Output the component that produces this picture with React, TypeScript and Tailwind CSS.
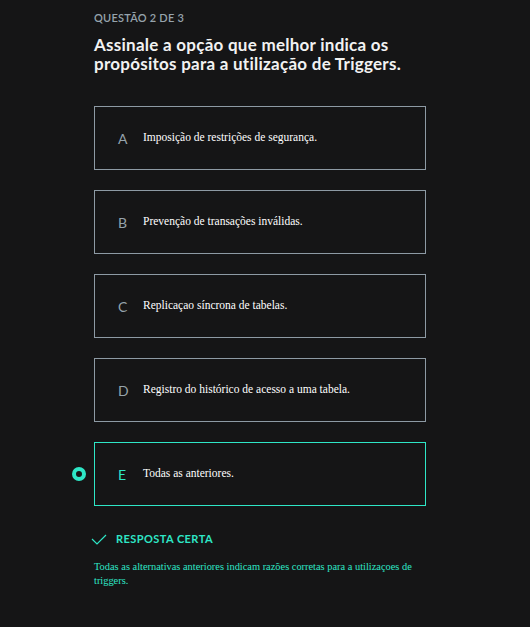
import React from 'react'

const options = [
  { id: 'A', text: 'Imposição de restrições de segurança.' },
  { id: 'B', text: 'Prevenção de transações inválidas.' },
  { id: 'C', text: 'Replicaçao síncrona de tabelas.' },
  { id: 'D', text: 'Registro do histórico de acesso a uma tabela.' },
  { id: 'E', text: 'Todas as anteriores.' },
]

const selected = 'E'

export default function App() {
  return (
    <div className="min-h-[627px] w-full bg-[#151516] font-['Lato','Liberation_Sans',sans-serif]">
      <div className="w-[332px] ml-[94px] pt-[11px] pb-8">
        {/* Header */}
        <p className="text-[11px] font-semibold tracking-[0.02em] text-[#96a3ac] leading-[14px]">QUESTÃO 2 DE 3</p>
        <h1 className="mt-[10px] text-[17px] font-bold leading-[19px] tracking-[0.015em] text-[#f2f2f2]">
          Assinale a opção que melhor indica os propósitos para a utilização de Triggers.
        </h1>

        {/* Options */}
        <div className="mt-[33px] flex flex-col gap-[20px]">
          {options.map((opt) => {
            const active = opt.id === selected
            return (
              <div key={opt.id} className="relative">
                {active && (
                  <span className="absolute left-[-22px] top-1/2 -translate-y-1/2 h-[14px] w-[14px] rounded-full border-[4px] border-[#2ee6c6] bg-[#151516]" />
                )}
                <div
                  className={`flex h-[64px] items-center border pl-[23px] ${
                    active ? 'border-[#2ee6c6]' : 'border-[#8d9aa4]'
                  }`}
                >
                  <span
                    className={`w-[25px] text-[14px] ${active ? 'text-[#2ee6c6]' : 'text-[#96a3ac]'}`}
                  >
                    {opt.id}
                  </span>
                  <span className="font-['Liberation_Serif',serif] text-[11.5px] text-white">{opt.text}</span>
                </div>
              </div>
            )
          })}
        </div>

        {/* Feedback */}
        <div className="mt-[25px] flex items-center">
          <svg width="16" height="11" viewBox="0 0 16 11" className="ml-[-3px]" fill="none">
            <path d="M1 5 L6 10 L15 1" stroke="#2ee6c6" strokeWidth="1.2" />
          </svg>
          <span className="ml-[9px] text-[11px] font-bold tracking-[0.04em] text-[#2ee6c6]">RESPOSTA CERTA</span>
        </div>
        <p className="mt-[12px] w-[325px] font-['Liberation_Serif',serif] text-[10.4px] leading-[14px] text-[#2ee6c6]">
          Todas as alternativas anteriores indicam razões corretas para a utilizaçoes de triggers.
        </p>
      </div>
    </div>
  )
}
